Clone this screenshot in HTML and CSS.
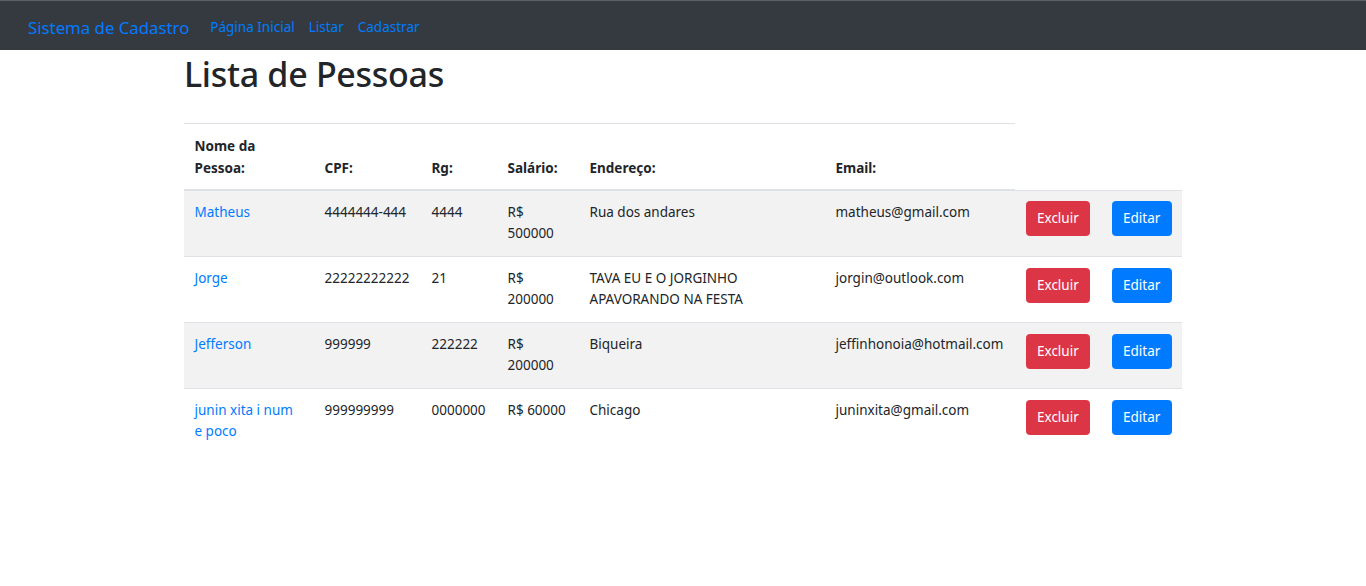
FILE: index.html
```html
<!DOCTYPE html>
<html lang="pt-BR">
<head>
<meta charset="utf-8">
<title>Lista de Pessoas</title>
<link rel="stylesheet" href="styles.css">
</head>
<body>
<nav class="navbar">
  <div class="nav-inner">
    <a class="brand" href="#">Sistema de Cadastro</a>
    <ul class="nav-links">
      <li><a class="nav-link" href="#">Página Inicial</a></li>
      <li><a class="nav-link" href="#">Listar</a></li>
      <li><a class="nav-link" href="#">Cadastrar</a></li>
    </ul>
  </div>
</nav>
<main class="container">
  <h1 class="title">Lista de Pessoas</h1>
  <table class="table">
    <colgroup>
      <col class="c-nome"><col class="c-cpf"><col class="c-rg"><col class="c-sal"><col class="c-end"><col class="c-email"><col class="c-exc"><col class="c-edit">
    </colgroup>
    <thead>
      <tr>
        <th>Nome da Pessoa:</th>
        <th>CPF:</th>
        <th>Rg:</th>
        <th>Salário:</th>
        <th>Endereço:</th>
        <th>Email:</th>
      </tr>
    </thead>
    <tbody>
      <tr class="odd">
        <td><a href="#">Matheus</a></td>
        <td>4444444-444</td>
        <td>4444</td>
        <td>R$ 500000</td>
        <td>Rua dos andares</td>
        <td>matheus@gmail.com</td>
        <td><button class="btn btn-danger">Excluir</button></td>
        <td><button class="btn btn-primary">Editar</button></td>
      </tr>
      <tr>
        <td><a href="#">Jorge</a></td>
        <td>22222222222</td>
        <td>21</td>
        <td>R$ 200000</td>
        <td>TAVA EU E O JORGINHO APAVORANDO NA FESTA</td>
        <td>jorgin@outlook.com</td>
        <td><button class="btn btn-danger">Excluir</button></td>
        <td><button class="btn btn-primary">Editar</button></td>
      </tr>
      <tr class="odd">
        <td><a href="#">Jefferson</a></td>
        <td>999999</td>
        <td>222222</td>
        <td>R$ 200000</td>
        <td>Biqueira</td>
        <td>jeffinhonoia@hotmail.com</td>
        <td><button class="btn btn-danger">Excluir</button></td>
        <td><button class="btn btn-primary">Editar</button></td>
      </tr>
      <tr>
        <td><a href="#">junin xita i num e poco</a></td>
        <td>999999999</td>
        <td>0000000</td>
        <td>R$ 60000</td>
        <td>Chicago</td>
        <td>juninxita@gmail.com</td>
        <td><button class="btn btn-danger">Excluir</button></td>
        <td><button class="btn btn-primary">Editar</button></td>
      </tr>
    </tbody>
  </table>
</main>
</body>
</html>
```
FILE: styles.css
```css
* { box-sizing: border-box; }

html, body {
  margin: 0;
  padding: 0;
  background: #fff;
}

body {
  font-family: "Noto Sans", "Open Sans", Arial, sans-serif;
  font-size: 13.5px;
  line-height: 21px;
  color: #212529;
}

a {
  color: #007bff;
  text-decoration: none;
}

.navbar {
  background: #343a40;
  border-top: 1px solid #5c5f63;
  height: 50px;
  padding: 9px 14px 5px;
}

.nav-inner {
  display: flex;
  align-items: center;
  height: 35px;
  padding: 0 14px;
}

.brand {
  font-size: 16.8px;
  line-height: 26px;
  margin-right: 14px;
  color: #007bff;
}

.nav-links {
  display: flex;
  list-style: none;
  margin: 0;
  padding: 0;
}

.nav-link {
  display: block;
  padding: 7px 7px;
  font-size: 13.5px;
  line-height: 21px;
}

.container {
  width: 998px;
  margin: 0 auto;
}

.title {
  font-size: 34px;
  font-weight: 500;
  line-height: 42px;
  margin: 0;
  padding-top: 3px;
  letter-spacing: -0.3px;
}

.table {
  width: 100%;
  table-layout: fixed;
  border-collapse: collapse;
  margin-top: 28px;
}

.c-nome { width: 130px; }
.c-cpf { width: 107px; }
.c-rg { width: 76px; }
.c-sal { width: 82px; }
.c-end { width: 246px; }
.c-email { width: 190px; }
.c-exc { width: 86px; }
.c-edit { width: 81px; }

.table th,
.table td {
  padding: 10.5px 10.5px 12.5px;
  text-align: left;
  vertical-align: top;
}

.table th {
  vertical-align: bottom;
  font-weight: 700;
  line-height: 22px;
  padding-bottom: 10.5px;
  border-top: 1px solid #dee2e6;
  border-bottom: 2px solid #dee2e6;
}

.table td {
  border-top: 1px solid #dee2e6;
}

.table tbody tr.odd {
  background: #f2f2f2;
}

.btn {
  display: inline-block;
  font-family: inherit;
  font-size: 13.5px;
  line-height: 21px;
  padding: 6px 10.5px;
  border: 1px solid transparent;
  border-radius: 3.5px;
  color: #fff;
  cursor: pointer;
}

.btn-danger {
  background: #dc3545;
  border-color: #dc3545;
}

.btn-primary {
  background: #007bff;
  border-color: #007bff;
}
```
